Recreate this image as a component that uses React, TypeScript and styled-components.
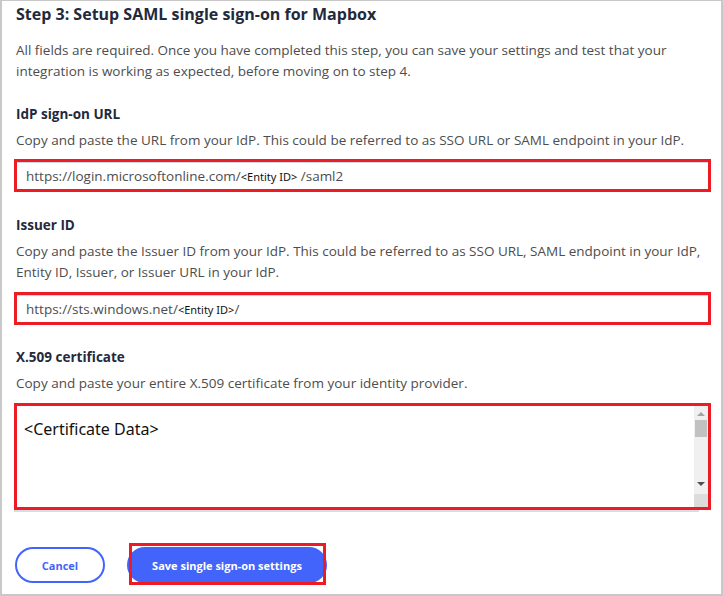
import React from "react";
import styled, { createGlobalStyle } from "styled-components";

const Global = createGlobalStyle`
  html, body { margin: 0; padding: 0; background: #ffffff; }
  body { font-family: "Open Sans", "Noto Sans", sans-serif; }
  * { box-sizing: border-box; }
`;

const Frame = styled.div`
  width: 723px;
  height: 596px;
  border-top: 1px solid #c8c8c8;
  border-left: 2px solid #c8c8c8;
  border-right: 2px solid #c8c8c8;
  border-bottom: 2px solid #c8c8c8;
  padding: 2px 11px 0 12px;
  display: flex;
  flex-direction: column;
  background: #fff;
`;

const Title = styled.h2`
  margin: 0 0 0 2px;
  font-size: 16px;
  line-height: 22px;
  font-weight: 700;
  color: #1f2a3c;
`;

const Intro = styled.p`
  margin: 15px 0 0 2px;
  font-size: 13.5px;
  line-height: 21px;
  color: #4d4d4d;
`;

const Label = styled.div<{ $top: number }>`
  margin: ${(p) => p.$top}px 0 0 2px;
  font-size: 13.5px;
  line-height: 21px;
  font-weight: 700;
  color: #1f2a3c;
`;

const Help = styled.p`
  margin: 5px 0 0 2px;
  font-size: 13.5px;
  line-height: 21px;
  color: #4d4d4d;
`;

const Highlight = styled.div<{ $top: number; $h: number }>`
  margin-top: ${(p) => p.$top}px;
  height: ${(p) => p.$h}px;
  flex: none;
  width: 697px;
  border: 3px solid #ed1c24;
  display: flex;
  align-items: stretch;
  background: #fff;
`;

const InputBox = styled.div`
  flex: 1;
  display: flex;
  align-items: center;
  padding-left: 9px;
  border-top: 1px solid #cdd6e2;
  font-size: 13.5px;
  color: #4d4d4d;
  white-space: pre;
`;

const Small = styled.span`
  font-family: "Noto Sans", "Open Sans", sans-serif;
  font-size: 11px;
  color: #111;
`;

const AreaText = styled.div`
  flex: 1;
  padding: 12px 0 0 7px;
  font-family: "Noto Sans", "Open Sans", sans-serif;
  font-size: 16px;
  line-height: 22px;
  color: #111;
`;

const Scrollbar = styled.div`
  width: 14px;
  background: #f0f0f0;
  display: flex;
  flex-direction: column;
  align-items: center;
`;

const Arrow = styled.div<{ $up?: boolean }>`
  width: 0;
  height: 0;
  border-left: 4px solid transparent;
  border-right: 4px solid transparent;
  ${(p) =>
    p.$up
      ? "border-bottom: 4px solid #a3a3a3; margin-top: 6px;"
      : "border-top: 4px solid #505050; margin-top: auto; margin-bottom: 8px;"}
`;

const Thumb = styled.div`
  width: 12px;
  height: 17px;
  margin-top: 4px;
  background: #c1c1c1;
`;

const Corner = styled.div`
  width: 14px;
  height: 13px;
  background: #dcdcdc;
`;

const AreaLine = styled.div`
  width: 685px;
  height: 2px;
  flex: none;
  background: #d9dde3;
`;

const Actions = styled.div`
  margin-top: 35px;
  display: flex;
  align-items: center;
  gap: 22px;
  padding-left: 1px;
`;

const Button = styled.button<{ $primary?: boolean; $w: number }>`
  width: ${(p) => p.$w}px;
  height: 36px;
  border-radius: 18px;
  border: 2px solid #4264fb;
  background: ${(p) => (p.$primary ? "#4264fb" : "#fff")};
  color: ${(p) => (p.$primary ? "#fff" : "#4264fb")};
  font-family: "Open Sans", sans-serif;
  font-weight: 700;
  font-size: 11px;
  padding: 0;
  cursor: pointer;
`;

const Marked = styled.div`
  position: relative;
  &::after {
    content: "";
    position: absolute;
    left: 2px;
    right: 1px;
    top: -4px;
    bottom: -2px;
    border: 3px solid #ed1c24;
    pointer-events: none;
  }
`;

export default function App() {
  return (
    <>
      <Global />
      <Frame>
        <Title>Step 3: Setup SAML single sign-on for Mapbox</Title>
        <Intro>
          All fields are required. Once you have completed this step, you can save your settings and test that your
          integration is working as expected, before moving on to step 4.
        </Intro>

        <Label $top={22}>IdP sign-on URL</Label>
        <Help>Copy and paste the URL from your IdP. This could be referred to as SSO URL or SAML endpoint in your IdP.</Help>
        <Highlight $top={8} $h={33}>
          <InputBox>
            https://login.microsoftonline.com/<Small>&lt;Entity ID&gt;</Small> /saml2
          </InputBox>
        </Highlight>

        <Label $top={23}>Issuer ID</Label>
        <Help>
          Copy and paste the Issuer ID from your IdP. This could be referred to as SSO URL, SAML endpoint in your IdP,
          Entity ID, Issuer, or Issuer URL in your IdP.
        </Help>
        <Highlight $top={9} $h={33}>
          <InputBox>
            https://sts.windows.net/<Small>&lt;Entity ID&gt;</Small>/
          </InputBox>
        </Highlight>

        <Label $top={22}>X.509 certificate</Label>
        <Help>Copy and paste your entire X.509 certificate from your identity provider.</Help>
        <Highlight $top={9} $h={107}>
          <AreaText>&lt;Certificate Data&gt;</AreaText>
          <Scrollbar>
            <Arrow $up />
            <Thumb />
            <Arrow />
            <Corner />
          </Scrollbar>
        </Highlight>
        <AreaLine />

        <Actions>
          <Button $w={90}>Cancel</Button>
          <Marked>
            <Button $primary $w={200}>Save single sign-on settings</Button>
          </Marked>
        </Actions>
      </Frame>
    </>
  );
}
